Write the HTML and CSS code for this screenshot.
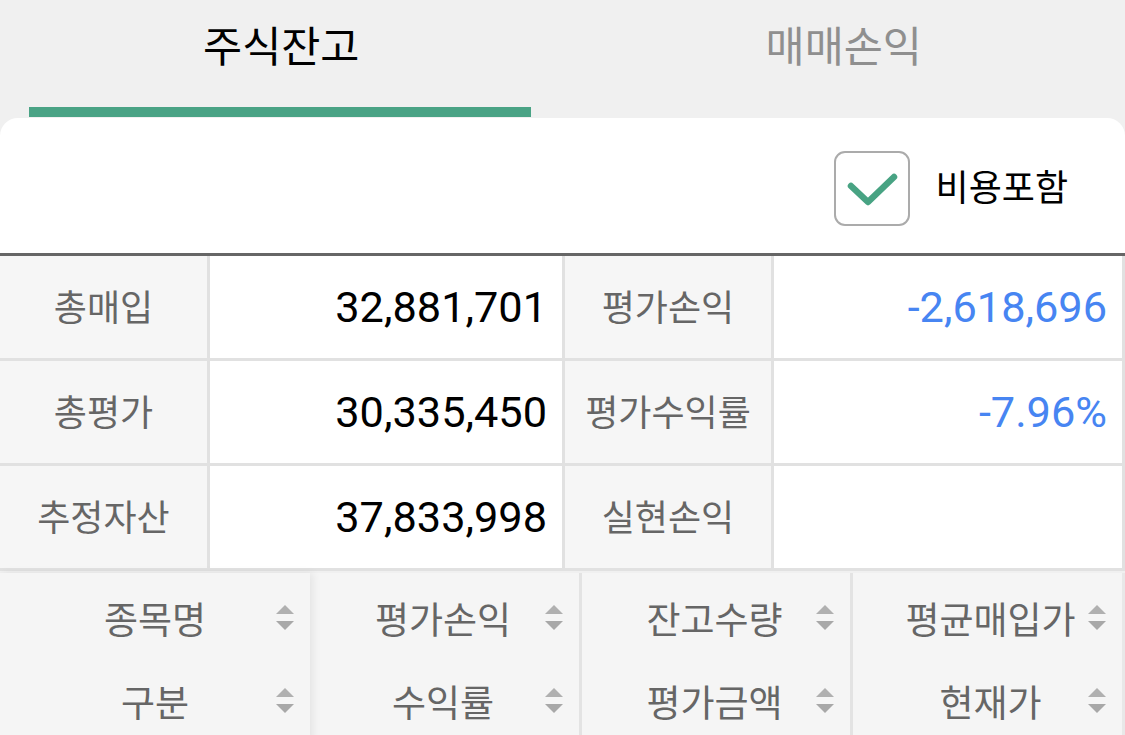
FILE: index.html
```html
<!DOCTYPE html>
<html lang="ko">
<head>
<meta charset="utf-8">
<title>주식잔고</title>
<link rel="stylesheet" href="styles.css">
</head>
<body>
<div class="page">
  <div class="tabs">
    <div class="tab active"><span class="tab-label">주식잔고</span><span class="indicator"></span></div>
    <div class="tab"><span class="tab-label">매매손익</span></div>
  </div>
  <div class="card">
    <div class="options">
      <label class="check">
        <span class="box">
          <svg width="76" height="75" viewBox="0 0 76 75"><path d="M17 35 L34 51 L60 26" fill="none" stroke="#48a383" stroke-width="6.5" stroke-linecap="round" stroke-linejoin="round"/></svg>
        </span>
        <span class="check-text">비용포함</span>
      </label>
    </div>
    <div class="summary">
      <div class="cell label">총매입</div>
      <div class="cell value">32,881,701</div>
      <div class="cell label">평가손익</div>
      <div class="cell value blue">-2,618,696</div>
      <div class="cell label">총평가</div>
      <div class="cell value">30,335,450</div>
      <div class="cell label">평가수익률</div>
      <div class="cell value blue">-7.96%</div>
      <div class="cell label">추정자산</div>
      <div class="cell value">37,833,998</div>
      <div class="cell label">실현손익</div>
      <div class="cell value"></div>
    </div>
    <div class="head">
      <div class="hcol fixed">
        <div class="hcell">종목명<span class="sort"></span></div>
        <div class="hcell">구분<span class="sort"></span></div>
      </div>
      <div class="hcol">
        <div class="hcell">평가손익<span class="sort"></span></div>
        <div class="hcell">수익률<span class="sort"></span></div>
      </div>
      <div class="hcol">
        <div class="hcell">잔고수량<span class="sort"></span></div>
        <div class="hcell">평가금액<span class="sort"></span></div>
      </div>
      <div class="hcol last">
        <div class="hcell">평균매입가<span class="sort"></span></div>
        <div class="hcell">현재가<span class="sort"></span></div>
      </div>
    </div>
  </div>
</div>
</body>
</html>
```

FILE: styles.css
```css
* { box-sizing: border-box; }
html, body {
  margin: 0;
  padding: 0;
  background: #f0f0f0;
  font-family: Roboto, "Noto Sans CJK KR", sans-serif;
  overflow: hidden;
}
.page {
  width: 1125px;
  height: 735px;
  overflow: hidden;
}
.tabs {
  display: flex;
  height: 118px;
}
.tab {
  flex: 1;
  position: relative;
  display: flex;
  justify-content: center;
  padding-top: 18px;
}
.tab-label {
  font-size: 42.5px;
  line-height: 60px;
  color: #8f8f8f;
}
.tab.active .tab-label { color: #000; }
.indicator {
  position: absolute;
  left: 29px;
  right: 32px;
  bottom: 1px;
  height: 10px;
  background: #4aa385;
}
.card {
  background: #fff;
  border-radius: 18px 18px 0 0;
}
.options {
  height: 135px;
  display: flex;
  justify-content: flex-end;
  align-items: center;
  padding-right: 57px;
  padding-top: 5px;
}
.check {
  display: flex;
  align-items: center;
}
.box {
  width: 76px;
  height: 75px;
  border: 2.5px solid #ababab;
  border-radius: 11px;
  display: flex;
  align-items: center;
  justify-content: center;
  margin-right: 26px;
}
.box svg { display: block; flex: none; }
.check-text {
  font-size: 36px;
  color: #000;
  padding-bottom: 6px;
}
.summary {
  display: grid;
  grid-template-columns: 210px 355px 209px 351px;
  grid-auto-rows: 105px;
  border-top: 3px solid #666;
}
.cell {
  display: flex;
  align-items: center;
  border-right: 3px solid #e1e1e1;
  border-bottom: 3px solid #e1e1e1;
}
.label {
  background: #f6f6f6;
  color: #666;
  font-size: 36px;
  justify-content: center;
  padding-bottom: 4px;
}
.value {
  background: #fff;
  color: #000;
  font-size: 43.3px;
  justify-content: flex-end;
  padding-right: 15px;
}
.blue {
  color: #4785f2;
}
.head {
  display: grid;
  grid-template-columns: 310px 272px 271px 272px;
  background: #f5f5f5;
  border-top: 2px solid #f0f0f0;
}
.hcol {
  border-right: 3px solid #e3e3e3;
  padding-top: 4px;
}
.hcol.fixed {
  border-right: none;
  position: relative;
  z-index: 1;
  box-shadow: 3px 0 8px rgba(0, 0, 0, 0.07);
}
.hcol.last { border-right-color: #e8e8e8; }
.hcell {
  position: relative;
  height: 83px;
  display: flex;
  align-items: center;
  justify-content: center;
  font-size: 37px;
  color: #666;
  padding-bottom: 2px;
}
.hcol:not(.fixed) .hcell { padding-right: 3px; }
.hcol.last .hcell { padding-right: 0; padding-left: 6px; }
.sort {
  position: absolute;
  right: 16px;
  top: 50%;
  margin-top: -14px;
  width: 18px;
  height: 25px;
}
.sort::before,
.sort::after {
  content: "";
  position: absolute;
  left: 0;
  border-left: 9px solid transparent;
  border-right: 9px solid transparent;
}
.sort::before {
  top: 0;
  border-bottom: 9px solid #b0b0b0;
}
.sort::after {
  bottom: 0;
  border-top: 9px solid #a8a8a8;
}
```
